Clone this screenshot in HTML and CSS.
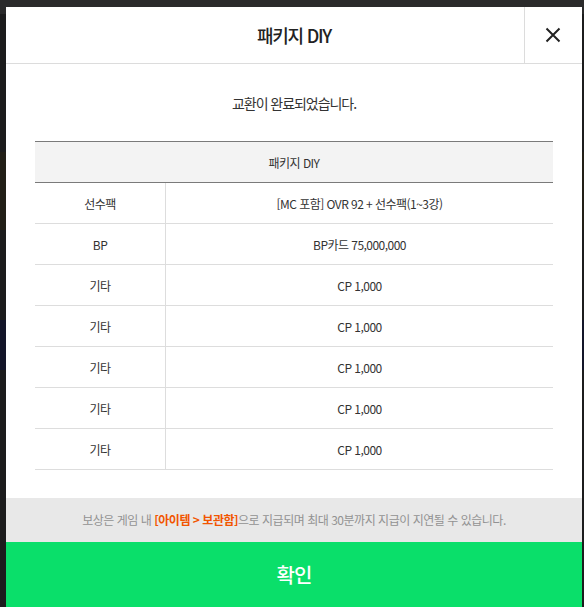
FILE: index.html
```html
<!DOCTYPE html>
<html lang="ko">
<head>
<meta charset="utf-8">
<title>패키지 DIY</title>
<link rel="stylesheet" href="styles.css">
</head>
<body>
<div class="modal">
  <div class="modal-head">
    <span class="head-spacer"></span>
    <h1 class="modal-title">패키지 DIY</h1>
    <button class="close-btn" type="button" aria-label="닫기">
      <svg width="16" height="16" viewBox="0 0 16 16"><path d="M1.5 1.5 L14.5 14.5 M14.5 1.5 L1.5 14.5" stroke="#222" stroke-width="2" fill="none"/></svg>
    </button>
  </div>
  <div class="modal-body">
    <p class="message">교환이 완료되었습니다.</p>
    <table class="reward-table">
      <thead>
        <tr><th colspan="2">패키지 DIY</th></tr>
      </thead>
      <tbody>
        <tr><td class="cat">선수팩</td><td>[MC 포함] OVR 92 + 선수팩(1~3강)</td></tr>
        <tr><td class="cat">BP</td><td>BP카드 75,000,000</td></tr>
        <tr><td class="cat">기타</td><td>CP 1,000</td></tr>
        <tr><td class="cat">기타</td><td>CP 1,000</td></tr>
        <tr><td class="cat">기타</td><td>CP 1,000</td></tr>
        <tr><td class="cat">기타</td><td>CP 1,000</td></tr>
        <tr><td class="cat">기타</td><td>CP 1,000</td></tr>
      </tbody>
    </table>
  </div>
  <p class="notice">보상은 게임 내 <strong class="hl">[아이템 &gt; 보관함]</strong>으로 지급되며 최대 30분까지 지급이 지연될 수 있습니다.</p>
  <button class="confirm-btn" type="button">확인</button>
</div>
</body>
</html>
```

FILE: styles.css
```css
html, body {
  margin: 0;
  padding: 0;
  height: 607px;
  overflow: hidden;
}
body {
  font-family: "Noto Sans CJK KR", "Noto Sans", sans-serif;
  background: linear-gradient(to bottom,
    #2a2a2b 0, #2a2a2b 14px,
    #1c1c1d 14px, #1c1c1d 152px,
    #221f17 152px, #221f17 230px,
    #1c1c1d 230px, #1c1c1d 320px,
    #131529 320px, #131529 370px,
    #1c1c1d 370px);
  padding-top: 7px;
}
.modal {
  margin-left: 6px;
  width: 576px;
  background: #fff;
}
.modal-head {
  display: grid;
  grid-template-columns: 58px 1fr 58px;
  height: 56px;
  border-bottom: 1px solid #dcdcdc;
}
.modal-title {
  margin: 0;
  font-size: 18px;
  font-weight: 500;
  color: #222;
  letter-spacing: -0.07em;
  text-align: center;
  line-height: 56px;
}
.close-btn {
  border: 0;
  border-left: 1px solid #dcdcdc;
  background: #fff;
  padding: 0;
  display: flex;
  align-items: center;
  justify-content: center;
  padding-right: 1px;
}
.modal-body {
  padding: 28px 29px 28px;
}
.message {
  margin: 0 0 27px;
  font-size: 14px;
  line-height: 22px;
  color: #333;
  text-align: center;
  letter-spacing: -0.075em;
}
.reward-table {
  width: 100%;
  border-collapse: collapse;
  font-size: 12px;
  color: #333;
  letter-spacing: -0.045em;
}
.reward-table th {
  height: 40px;
  padding: 0;
  background: #f3f3f3;
  border-top: 1px solid #7a7a7a;
  border-bottom: 1px solid #7a7a7a;
  font-weight: 400;
  text-align: center;
}
.reward-table td {
  height: 40px;
  padding: 0;
  text-align: center;
  border-bottom: 1px solid #dddddd;
}
.reward-table td.cat {
  width: 130px;
  border-right: 1px solid #dddddd;
}
.notice {
  margin: 0;
  height: 44px;
  line-height: 44px;
  background: #e8e8e8;
  text-align: center;
  font-size: 12px;
  color: #929292;
  letter-spacing: -0.04em;
}
.hl {
  color: #f25500;
  font-weight: 700;
}
.confirm-btn {
  display: block;
  width: 100%;
  height: 68px;
  border: 0;
  margin: 0;
  padding: 0 0 4px;
  background: #0adf6a;
  color: #fff;
  font-family: "Noto Sans CJK KR", "Noto Sans", sans-serif;
  font-size: 20px;
  font-weight: 500;
  letter-spacing: -0.04em;
}
```
